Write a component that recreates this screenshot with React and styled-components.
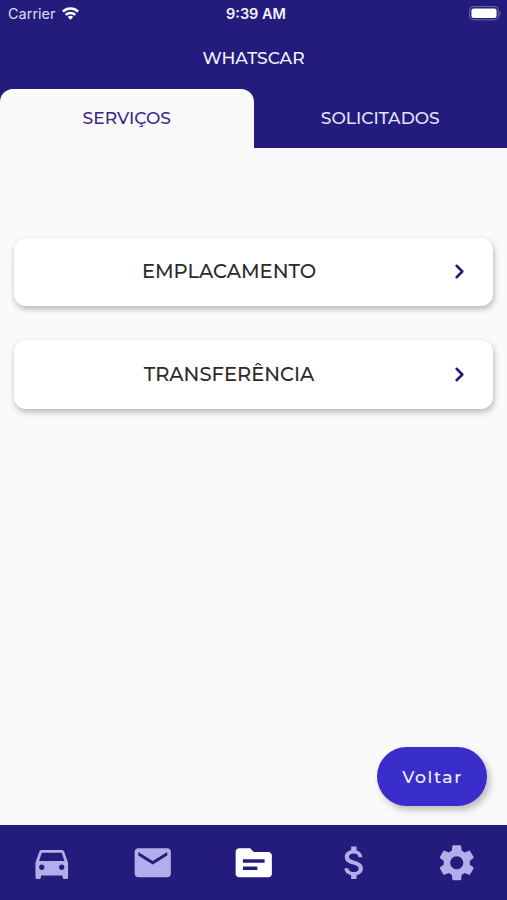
import { ChevronRight } from "lucide-react";
import styled, { createGlobalStyle } from "styled-components";
import {
  MdAttachMoney,
  MdDirectionsCar,
  MdMail,
  MdSettings,
  MdTopic,
} from "react-icons/md";

const services = ["EMPLACAMENTO", "TRANSFERÊNCIA"];

const navItems = [
  { label: "Carros", Icon: MdDirectionsCar },
  { label: "Mensagens", Icon: MdMail },
  { label: "Serviços", Icon: MdTopic, active: true },
  { label: "Pagamentos", Icon: MdAttachMoney },
  { label: "Ajustes", Icon: MdSettings },
];

export default function App() {
  return (
    <>
      <GlobalStyle />
      <StyledScreen>
        <StyledHeader>
          <StyledStatusBar>
            <StyledCarrier>
              Carrier
              <WifiIcon />
            </StyledCarrier>
            <StyledTime>9:39 AM</StyledTime>
            <StyledBattery>
              <BatteryIcon />
            </StyledBattery>
          </StyledStatusBar>
          <StyledTitle>WHATSCAR</StyledTitle>
          <StyledTabs>
            <StyledTab $active>SERVIÇOS</StyledTab>
            <StyledTab>SOLICITADOS</StyledTab>
          </StyledTabs>
        </StyledHeader>
        <StyledMain>
          <StyledServiceList>
            {services.map((name) => (
              <StyledServiceCard key={name}>
                <StyledServiceName>{name}</StyledServiceName>
                <ChevronRight size={23} color="#241c7c" strokeWidth={2.6} />
              </StyledServiceCard>
            ))}
          </StyledServiceList>
          <StyledBackButton>Voltar</StyledBackButton>
        </StyledMain>
        <StyledNav>
          {navItems.map(({ label, Icon, active }) => (
            <StyledNavButton key={label} aria-label={label} $active={active}>
              <Icon size={43.5} />
            </StyledNavButton>
          ))}
        </StyledNav>
      </StyledScreen>
    </>
  );
}

function WifiIcon() {
  return (
    <svg width="17" height="13" viewBox="0 0 17 13" fill="none">
      <g stroke="#ffffff" strokeWidth="2.5">
        <path d="M0.9 4.7a10.8 10.8 0 0 1 15.2 0" />
        <path d="M3.7 7.9a6.8 6.8 0 0 1 9.6 0" />
      </g>
      <path d="M8.5 12.8 5.8 10.1a4 4 0 0 1 5.4 0z" fill="#ffffff" />
    </svg>
  );
}

function BatteryIcon() {
  return (
    <svg width="32" height="15" viewBox="0 0 32 15" fill="none">
      <rect
        x="0.6"
        y="0.6"
        width="28.8"
        height="13.2"
        rx="3.8"
        stroke="#6f69ad"
      />
      <rect x="2.4" y="2.4" width="25.2" height="9.6" rx="2.2" fill="#ffffff" />
      <path d="M30.6 5.2v4c1.3-.5 1.3-3.5 0-4z" fill="#8580bb" />
    </svg>
  );
}

const GlobalStyle = createGlobalStyle`
  * {
    box-sizing: border-box;
  }
  body {
    margin: 0;
    font-family: Montserrat, Lato, sans-serif;
  }
  button {
    border: none;
    padding: 0;
    font-family: inherit;
    cursor: pointer;
  }
`;

const StyledScreen = styled.div`
  display: flex;
  flex-direction: column;
  height: 100vh;
  background-color: #fafafa;
`;

const StyledHeader = styled.header`
  background-color: #241c7c;
  color: #f4f3ff;
`;

const StyledStatusBar = styled.div`
  display: grid;
  grid-template-columns: 1fr auto 1fr;
  align-items: center;
  height: 27px;
  padding: 0 6px 0 8px;
  font-family: Inter, sans-serif;
  font-size: 14.5px;
`;

const StyledCarrier = styled.span`
  display: flex;
  align-items: center;
  gap: 6px;
  color: #dddbf0;
`;

const StyledTime = styled.span`
  padding-left: 3px;
  font-weight: 600;
`;

const StyledBattery = styled.span`
  display: flex;
  justify-content: flex-end;
`;

const StyledTitle = styled.h1`
  display: flex;
  align-items: center;
  justify-content: center;
  height: 62px;
  margin: 0;
  padding-bottom: 2px;
  font-size: 17.1px;
  font-weight: 500;
`;

const StyledTabs = styled.div`
  display: grid;
  grid-template-columns: 1fr 1fr;
`;

const StyledTab = styled.button`
  height: 58.5px;
  padding-bottom: 1px;
  border-radius: 13px 13px 0 0;
  background-color: ${(props) => (props.$active ? "#fafafa" : "transparent")};
  color: ${(props) => (props.$active ? "#37298a" : "#e6e4fb")};
  font-size: 17.1px;
  font-weight: 500;
`;

const StyledMain = styled.main`
  display: flex;
  flex: 1;
  flex-direction: column;
  justify-content: space-between;
  padding: 90px 14px 19px;
`;

const StyledServiceList = styled.div`
  display: flex;
  flex-direction: column;
  gap: 34px;
`;

const StyledServiceCard = styled.button`
  display: flex;
  align-items: center;
  height: 68.5px;
  padding: 0 22px 0 0;
  border-radius: 12px;
  background-color: #ffffff;
  box-shadow: 1px 3px 6px rgba(0, 0, 0, 0.28);
`;

const StyledServiceName = styled.span`
  flex: 1;
  padding: 0 4px 1px 0;
  color: #2b2b2b;
  font-size: 19.5px;
  font-weight: 500;
  text-align: center;
`;

const StyledBackButton = styled.button`
  align-self: flex-end;
  width: 110px;
  height: 59px;
  margin-right: 6px;
  padding-left: 1px;
  border-radius: 30px;
  background-color: #392dcb;
  box-shadow: 3px 4px 7px rgba(0, 0, 0, 0.25);
  color: #f2f1ff;
  font-size: 17.2px;
  font-weight: 500;
  letter-spacing: 1.6px;
`;

const StyledNav = styled.nav`
  display: grid;
  grid-template-columns: repeat(5, 1fr);
  height: 75px;
  padding-left: 1px;
  background-color: #241c7c;
`;

const StyledNavButton = styled.button`
  display: flex;
  align-items: center;
  justify-content: center;
  background: none;
  color: ${(props) => (props.$active ? "#ffffff" : "#b2aeec")};
`;
